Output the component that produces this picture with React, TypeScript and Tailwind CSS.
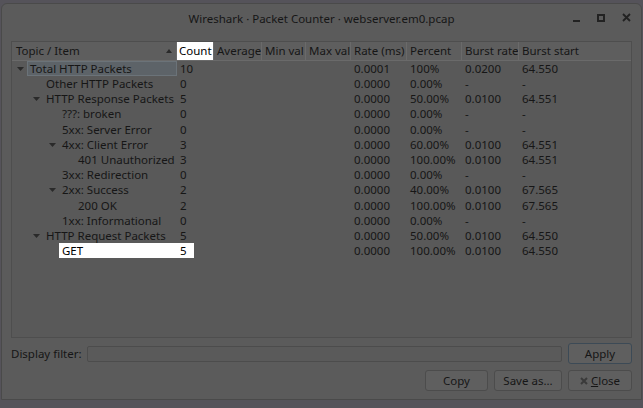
import React from 'react'

type Row = {
  label: string
  level: number
  open?: boolean
  count: string
  rate: string
  pct: string
  burst: string
  start: string
  selected?: boolean
  hl?: boolean
}

const rows: Row[] = [
  { label: 'Total HTTP Packets', level: 0, open: true, count: '10', rate: '0.0001', pct: '100%', burst: '0.0200', start: '64.550', selected: true },
  { label: 'Other HTTP Packets', level: 1, count: '0', rate: '0.0000', pct: '0.00%', burst: '-', start: '-' },
  { label: 'HTTP Response Packets', level: 1, open: true, count: '5', rate: '0.0000', pct: '50.00%', burst: '0.0100', start: '64.551' },
  { label: '???: broken', level: 2, count: '0', rate: '0.0000', pct: '0.00%', burst: '-', start: '-' },
  { label: '5xx: Server Error', level: 2, count: '0', rate: '0.0000', pct: '0.00%', burst: '-', start: '-' },
  { label: '4xx: Client Error', level: 2, open: true, count: '3', rate: '0.0000', pct: '60.00%', burst: '0.0100', start: '64.551' },
  { label: '401 Unauthorized', level: 3, count: '3', rate: '0.0000', pct: '100.00%', burst: '0.0100', start: '64.551' },
  { label: '3xx: Redirection', level: 2, count: '0', rate: '0.0000', pct: '0.00%', burst: '-', start: '-' },
  { label: '2xx: Success', level: 2, open: true, count: '2', rate: '0.0000', pct: '40.00%', burst: '0.0100', start: '67.565' },
  { label: '200 OK', level: 3, count: '2', rate: '0.0000', pct: '100.00%', burst: '0.0100', start: '67.565' },
  { label: '1xx: Informational', level: 2, count: '0', rate: '0.0000', pct: '0.00%', burst: '-', start: '-' },
  { label: 'HTTP Request Packets', level: 1, open: true, count: '5', rate: '0.0000', pct: '50.00%', burst: '0.0100', start: '64.550' },
  { label: 'GET', level: 2, count: '5', rate: '0.0000', pct: '100.00%', burst: '0.0100', start: '64.550', hl: true },
]

const indent = ['pl-[2px]', 'pl-[18px]', 'pl-[34px]', 'pl-[50px]']

const Caret = () => (
  <svg width="7" height="4" viewBox="0 0 7 4" className="shrink-0">
    <path d="M0 0h7L3.5 4z" fill="#2a2a2a" />
  </svg>
)

const App = () => {
  return (
    <div className="w-[643px] h-[408px] bg-[#55535a] pt-[3px] overflow-hidden whitespace-nowrap font-['Noto_Sans',sans-serif] text-[11.5px] text-[#161616]">
      <div className="ml-[1px] w-[641px] h-[397px] bg-[#5b5b5b] rounded-t-[6px] border border-[#4a4a4a] flex flex-col">
        {/* Title bar */}
        <div className="h-[28px] flex items-center relative shrink-0">
          <div className="flex-1 text-center pt-[2px]">Wireshark · Packet Counter · webserver.em0.pcap</div>
          <div className="absolute right-[10px] top-[9px] flex items-center gap-[17px]">
            <div className="w-[7px] h-[2px] bg-[#222] mt-[6px]" />
            <div className="w-[8px] h-[8px] border-[2px] border-[#222]" />
            <svg width="9" height="9" viewBox="0 0 9 9">
              <path d="M1 1l7 7M8 1L1 8" stroke="#222" strokeWidth="1.8" />
            </svg>
          </div>
        </div>

        {/* Tree */}
        <div className="mx-[9px] mt-[9px] h-[297px] border border-[#4e4e4e] bg-[#595959] flex flex-col">
          <div className="h-[19px] flex items-center bg-[#5e5e5e] border-b border-[#6a6a6a] shrink-0">
            <div className="w-[165px] h-full flex items-center justify-between pl-[4px] pr-[4px] border-r border-[#6a6a6a]">
              <span>Topic / Item</span>
              <svg width="6" height="4" viewBox="0 0 6 4">
                <path d="M0 4h6L3 0z" fill="#2a2a2a" />
              </svg>
            </div>
            <div className="w-[36px] h-full flex items-center pl-[2px] bg-white text-black">Count</div>
            <div className="w-[48px] h-full flex items-center pl-[3px] border-l border-[#6a6a6a]">Average</div>
            <div className="w-[44px] h-full flex items-center pl-[3px] border-l border-[#6a6a6a]">Min val</div>
            <div className="w-[45px] h-full flex items-center pl-[3px] border-l border-[#6a6a6a]">Max val</div>
            <div className="w-[56px] h-full flex items-center pl-[3px] border-l border-[#6a6a6a]">Rate (ms)</div>
            <div className="w-[55px] h-full flex items-center pl-[3px] border-l border-[#6a6a6a]">Percent</div>
            <div className="w-[57px] h-full flex items-center pl-[3px] border-l border-[#6a6a6a]">Burst rate</div>
            <div className="flex-1 h-full flex items-center pl-[3px] border-l border-[#6a6a6a]">Burst start</div>
          </div>

          <div className="flex flex-col">
            {rows.map((r) => (
              <div key={r.label} className="h-[15.2px] flex items-center leading-none">
                <div className={`w-[165px] h-full flex items-center ${indent[r.level]}`}>
                  <div className="w-[13px] flex justify-center shrink-0">{r.open && <Caret />}</div>
                  <div
                    className={`flex-1 h-full flex items-center ${
                      r.selected
                        ? 'bg-[#5d6368] border border-[#6b7379] pl-[2px]'
                        : r.hl
                          ? 'bg-white text-black pl-[3px]'
                          : 'pl-[3px]'
                    }`}
                  >
                    {r.label}
                  </div>
                </div>
                <div className="w-[36px] h-full flex items-center">
                  <div className={`w-[17px] h-full flex items-center pl-[3px] ${r.hl ? 'bg-white text-black' : ''}`}>{r.count}</div>
                </div>
                <div className="w-[48px]" />
                <div className="w-[44px]" />
                <div className="w-[46px]" />
                <div className="w-[56px] pl-[3px]">{r.rate}</div>
                <div className="w-[55px] pl-[3px]">{r.pct}</div>
                <div className="w-[57px] pl-[3px]">{r.burst}</div>
                <div className="flex-1 pl-[3px]">{r.start}</div>
              </div>
            ))}
          </div>
        </div>

        {/* Display filter */}
        <div className="flex items-center mt-[5px] px-[9px] gap-[5px]">
          <span className="w-[71px]">Display filter:</span>
          <div className="flex-1 h-[16px] border border-[#4c4c4c] bg-[#5a5a5a] rounded-[2px]" />
          <button className="ml-[1px] w-[64px] h-[21px] rounded-[3px] border border-[#3c4a56] bg-[#5f5f5f]">Apply</button>
        </div>

        <div className="flex justify-end gap-[6px] mt-[6px] px-[9px]">
          <button className="w-[63px] h-[21px] rounded-[3px] border border-[#4c4c4c] bg-[#5f5f5f]">Copy</button>
          <button className="w-[68px] h-[21px] rounded-[3px] border border-[#4c4c4c] bg-[#5f5f5f]">Save as...</button>
          <button className="w-[64px] h-[21px] rounded-[3px] border border-[#4c4c4c] bg-[#5f5f5f] flex items-center justify-center gap-[3px]">
            <svg width="8" height="8" viewBox="0 0 8 8">
              <path d="M1 1l6 6M7 1L1 7" stroke="#3a3a3a" strokeWidth="2" />
            </svg>
            <span>
              <span className="underline">C</span>lose
            </span>
          </button>
        </div>
      </div>
    </div>
  )
}

export default App
